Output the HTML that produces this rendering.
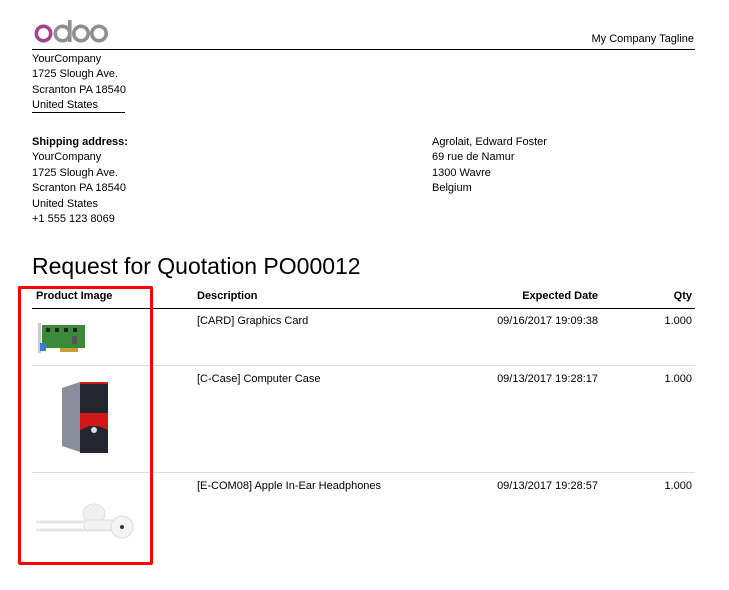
<!DOCTYPE html>
<html><head><meta charset="utf-8"><style>
body{margin:0;width:729px;height:590px;background:#fff;position:relative;font-family:"Liberation Sans",sans-serif;font-size:11px;color:#000;overflow:hidden}
.a{position:absolute;white-space:nowrap;line-height:15.4px}
.b{font-weight:bold}
.r{text-align:right}
</style></head><body>
<svg class="a" style="left:32px;top:17px" width="80" height="30" viewBox="0 0 80 30">
<circle cx="11.5" cy="16.5" r="7.2" fill="none" stroke="#a24689" stroke-width="3.6"/>
<circle cx="30.5" cy="16.5" r="7.2" fill="none" stroke="#8f8f8f" stroke-width="3.6"/>
<rect x="36" y="3" width="3.6" height="22" fill="#8f8f8f"/>
<circle cx="49" cy="16.5" r="7.2" fill="none" stroke="#8f8f8f" stroke-width="3.6"/>
<circle cx="67" cy="16.5" r="7.2" fill="none" stroke="#8f8f8f" stroke-width="3.6"/>
</svg>
<div class="a" style="right:35px;top:32px">My Company Tagline</div>
<div style="position:absolute;left:32px;top:49px;width:663px;height:1px;background:#000"></div>
<div class="a" style="left:32px;top:52px">YourCompany<br>1725 Slough Ave.<br>Scranton PA 18540<br>United States</div>
<div style="position:absolute;left:32px;top:112px;width:93px;height:1px;background:#000"></div>
<div class="a" style="left:32px;top:135px"><span class="b">Shipping address:</span><br>YourCompany<br>1725 Slough Ave.<br>Scranton PA 18540<br>United States<br>+1 555 123 8069</div>
<div class="a" style="left:432px;top:135px">Agrolait, Edward Foster<br>69 rue de Namur<br>1300 Wavre<br>Belgium</div>
<div class="a" style="left:32px;top:252px;font-size:23px;line-height:28px">Request for Quotation PO00012</div>
<div class="a b" style="left:36px;top:289px">Product Image</div>
<div class="a b" style="left:197px;top:289px">Description</div>
<div class="a b" style="right:131px;top:289px">Expected Date</div>
<div class="a b" style="right:37px;top:289px">Qty</div>
<div style="position:absolute;left:32px;top:308px;width:663px;height:1px;background:#000"></div>
<div style="position:absolute;left:32px;top:365px;width:663px;height:1px;background:#ddd"></div>
<div style="position:absolute;left:32px;top:472px;width:663px;height:1px;background:#ddd"></div>
<div class="a" style="left:197px;top:314px">[CARD] Graphics Card</div>
<div class="a r" style="right:131px;top:314px">09/16/2017 19:09:38</div>
<div class="a r" style="right:37px;top:314px">1.000</div>
<div class="a" style="left:197px;top:372px">[C-Case] Computer Case</div>
<div class="a r" style="right:131px;top:372px">09/13/2017 19:28:17</div>
<div class="a r" style="right:37px;top:372px">1.000</div>
<div class="a" style="left:197px;top:479px">[E-COM08] Apple In-Ear Headphones</div>
<div class="a r" style="right:131px;top:479px">09/13/2017 19:28:57</div>
<div class="a r" style="right:37px;top:479px">1.000</div>
<svg class="a" style="left:34px;top:318px" width="54" height="38" viewBox="0 0 54 38">
<rect x="4" y="5" width="3" height="30" fill="#ccc"/>
<rect x="8" y="7" width="43" height="23" fill="#3a8a3a"/>
<rect x="26" y="30" width="18" height="4" fill="#c9a030"/>
<rect x="6" y="25" width="6" height="8" fill="#3a7ad8"/>
<rect x="12" y="10" width="4" height="4" fill="#222"/><rect x="21" y="10" width="4" height="4" fill="#222"/><rect x="30" y="10" width="4" height="4" fill="#222"/><rect x="39" y="10" width="4" height="4" fill="#222"/>
<rect x="38" y="18" width="5" height="8" fill="#555"/>
</svg>
<svg class="a" style="left:60px;top:380px" width="52" height="78" viewBox="0 0 52 78">
<polygon points="2,8 20,2 20,72 2,66" fill="#8a8e9c"/>
<rect x="20" y="2" width="28" height="71" fill="#23262e"/>
<polygon points="20,33 48,33 48,50 38,46 30,46 20,50" fill="#d01818"/>
<rect x="20" y="2" width="28" height="2" fill="#d01818"/>
<circle cx="34" cy="50" r="3" fill="#ddd"/>
</svg>
<svg class="a" style="left:34px;top:500px" width="104" height="42" viewBox="0 0 104 42">
<path d="M2 22 L80 22 M2 30 L80 30" stroke="#e6e6e6" stroke-width="3"/>
<ellipse cx="60" cy="14" rx="11" ry="10" fill="#f0f0f0" stroke="#ddd"/>
<rect x="50" y="20" width="36" height="10" rx="4" fill="#f2f2f2" stroke="#ddd"/>
<circle cx="88" cy="27" r="11" fill="#f3f3f3" stroke="#ddd"/>
<circle cx="88" cy="27" r="2" fill="#333"/>
</svg>
<div style="position:absolute;left:18px;top:286px;width:129px;height:273px;border:3px solid #f00;border-radius:2px"></div>
</body></html>
